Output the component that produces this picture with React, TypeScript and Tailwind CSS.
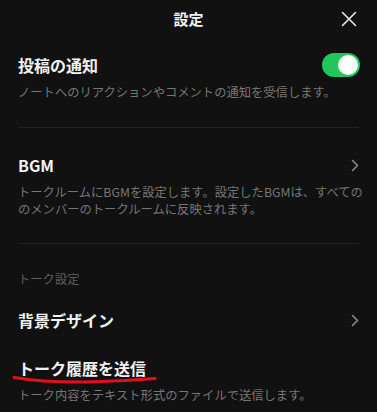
import React from 'react';

const Chevron = () => (
  <svg width="8" height="13" viewBox="0 0 8 13" fill="none" className="shrink-0">
    <path d="M1.5 1.5L6.5 6.5L1.5 11.5" stroke="#8a8a8a" strokeWidth="1.6" strokeLinecap="round" strokeLinejoin="round" />
  </svg>
);

export default function App() {
  return (
    <div
      className="w-[377px] h-[412px] overflow-hidden bg-[#111111] text-[#f2f2f2] relative"
      style={{ fontFamily: '"Noto Sans CJK JP", "Noto Sans", sans-serif' }}
    >
      {/* Header */}
      <div className="h-[37px] flex items-center justify-center relative">
        <span className="text-[15px] font-bold leading-none">設定</span>
        <button className="absolute right-[20px] top-[11px]">
          <svg width="16" height="16" viewBox="0 0 16 16" fill="none">
            <path d="M1.5 1.5L14.5 14.5M14.5 1.5L1.5 14.5" stroke="#e8e8e8" strokeWidth="1.6" strokeLinecap="round" />
          </svg>
        </button>
      </div>

      <div className="px-[18px]">
        {/* 投稿の通知 */}
        <div className="pt-[17px] pb-[26px] border-b border-[#222222]">
          <div className="flex items-center justify-between h-[22px]">
            <span className="text-[16px] font-bold leading-[22px]">投稿の通知</span>
            <div className="w-[38px] h-[24px] rounded-full bg-[#22c55e] flex items-center justify-end pr-[2px] mr-[-1px]">
              <div className="w-[20px] h-[20px] rounded-full bg-white" />
            </div>
          </div>
          <p className="mt-[7px] text-[12.3px] leading-[18px] text-[#767676]">
            ノートへのリアクションやコメントの通知を受信します。
          </p>
        </div>

        {/* BGM */}
        <div className="pt-[26px] pb-[25px] border-b border-[#222222]">
          <div className="flex items-center justify-between h-[22px]">
            <span className="text-[16px] font-bold leading-[22px]">BGM</span>
            <Chevron />
          </div>
          <p className="mt-[8px] text-[12.3px] leading-[17px] text-[#767676] whitespace-nowrap">
            トークルームにBGMを設定します。設定したBGMは、すべての
            <br />
            のメンバーのトークルームに反映されます。
          </p>
        </div>

        {/* トーク設定 */}
        <div className="pt-[26px]">
          <p className="text-[12.3px] leading-[18px] text-[#5f5f5f]">トーク設定</p>
          <div className="mt-[21px] flex items-center justify-between h-[22px]">
            <span className="text-[16px] font-bold leading-[22px]">背景デザイン</span>
            <Chevron />
          </div>
          <div className="mt-[26px] h-[22px] flex items-center relative">
            <span className="text-[16px] font-bold leading-[22px]">トーク履歴を送信</span>
            <svg
              className="absolute left-[-6px] top-[17px]"
              width="146"
              height="12"
              viewBox="0 0 146 12"
              fill="none"
            >
              <path d="M2 3.5C20 6.5 45 8.5 75 8C100 7.5 125 6 143 4.5" stroke="#e3101c" strokeWidth="3" strokeLinecap="round" />
            </svg>
          </div>
          <p className="mt-[7px] text-[12.3px] leading-[18px] text-[#767676]">
            トーク内容をテキスト形式のファイルで送信します。
          </p>
        </div>
      </div>
    </div>
  );
}
